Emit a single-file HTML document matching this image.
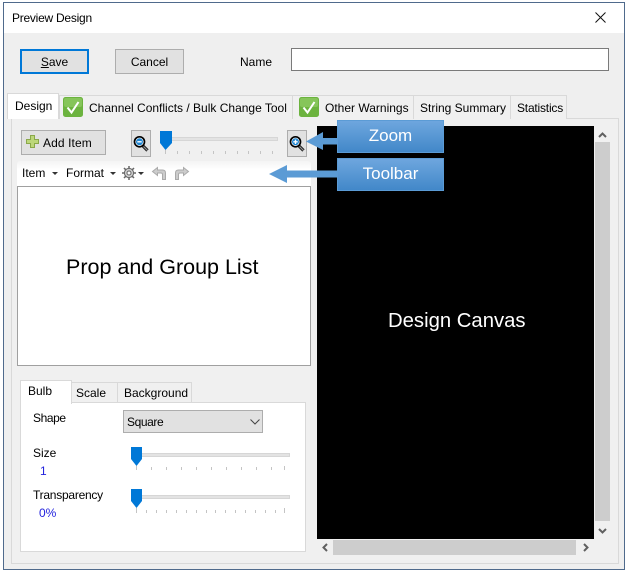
<!DOCTYPE html>
<html><head><meta charset="utf-8"><style>
html,body{margin:0;padding:0;width:626px;height:571px;overflow:hidden;background:#fff}
body{position:relative;font-family:"Liberation Sans",sans-serif;font-size:12px;color:#000}
.a{position:absolute;box-sizing:border-box}
.t{position:absolute;white-space:nowrap;line-height:16px}
.btn{position:absolute;box-sizing:border-box;background:#e1e1e1;border:1px solid #adadad}
.tab{position:absolute;box-sizing:border-box;background:#f0f0f0;border:1px solid #d9d9d9;border-bottom:none}
svg{position:absolute;overflow:visible}
.call{position:absolute;box-sizing:border-box;width:107px;height:33px;background:linear-gradient(#6ea6de,#4288c9);border:1px solid #5b9bd5;color:#fff;font-size:17px;text-align:center;line-height:30px}
</style></head><body>
<div class="a" style="left:3px;top:2px;width:622px;height:568px;background:#efefef;border:1px solid #4f6a8c"></div>
<div class="a" style="left:4px;top:3px;width:620px;height:30px;background:#fff"></div>
<div class="t" style="left:12px;top:10px;letter-spacing:-0.25px">Preview Design</div>
<svg style="left:595px;top:12px" width="11" height="11"><path d="M0.5 0.5L10.5 10.5M10.5 0.5L0.5 10.5" stroke="#111" fill="none"/></svg>

<div class="btn" style="left:20px;top:49px;width:69px;height:25px;border:2px solid #0078d7;text-align:center;line-height:23px"><u>S</u>ave</div>
<div class="btn" style="left:115px;top:49px;width:69px;height:25px;text-align:center;line-height:24px">Cancel</div>
<div class="t" style="left:240px;top:54px">Name</div>
<div class="a" style="left:291px;top:48px;width:318px;height:23px;background:#fff;border:1px solid #7a7a7a"></div>

<!-- main panel -->
<div class="a" style="left:11px;top:118px;width:608px;height:446px;background:#f0f0f0;border:1px solid #d9d9d9"></div>
<!-- tabs -->
<div class="tab" style="left:59px;top:95px;width:234px;height:24px"></div>
<div class="tab" style="left:292px;top:95px;width:122px;height:24px"></div>
<div class="tab" style="left:413px;top:95px;width:98px;height:24px"></div>
<div class="tab" style="left:510px;top:95px;width:57px;height:24px"></div>
<div class="tab" style="left:7px;top:93px;width:52px;height:26px;background:#fff;z-index:2"></div>
<div class="t" style="left:15px;top:98px;z-index:3">Design</div>
<svg style="left:63px;top:97px" width="20" height="20"><rect x="0" y="0" width="20" height="20" rx="2.5" fill="#6cb33f"/><rect x="1" y="1" width="18" height="9" rx="2" fill="#86c55a"/><path d="M4.5 10.5L8.5 15.5L15.5 5" stroke="#fff" stroke-width="2" fill="none"/></svg>
<div class="t" style="left:89px;top:100px">Channel Conflicts / Bulk Change Tool</div>
<svg style="left:299px;top:97px" width="20" height="20"><rect x="0" y="0" width="20" height="20" rx="2.5" fill="#6cb33f"/><rect x="1" y="1" width="18" height="9" rx="2" fill="#86c55a"/><path d="M4.5 10.5L8.5 15.5L15.5 5" stroke="#fff" stroke-width="2" fill="none"/></svg>
<div class="t" style="left:325px;top:100px">Other Warnings</div>
<div class="t" style="left:420px;top:100px">String Summary</div>
<div class="t" style="left:517px;top:100px;letter-spacing:-0.2px">Statistics</div>

<!-- add item -->
<div class="btn" style="left:21px;top:130px;width:85px;height:25px"></div>
<svg style="left:26px;top:135px" width="14" height="14"><path d="M4.5 0.5H8.5V4.500H12.500V8.500H8.500V12.500H4.500V8.500H0.500V4.500H4.500Z" fill="#bcd77a" stroke="#8aa84a"/></svg>
<div class="t" style="left:43px;top:135px;letter-spacing:0.1px">Add Item</div>
<!-- zoom buttons -->
<div class="btn" style="left:131px;top:130px;width:20px;height:27px"></div>
<svg style="left:134px;top:136px" width="16" height="16"><path d="M9 10L13.500 14.500" stroke="#222" stroke-width="3.200"/><path d="M9.500 10.500L13.500 14.500" stroke="#999" stroke-width="1"/><circle cx="5.500" cy="5.800" r="5" fill="#fff" stroke="#000" stroke-width="1.700"/><circle cx="5.500" cy="5.800" r="3.500" fill="#1f86d2"/><path d="M3.300 5.800H7.700" stroke="#fff" stroke-width="1.400"/></svg>
<div class="btn" style="left:287px;top:130px;width:20px;height:27px"></div>
<svg style="left:290px;top:136px" width="16" height="16"><path d="M9 10L13.500 14.500" stroke="#222" stroke-width="3.200"/><path d="M9.500 10.500L13.500 14.500" stroke="#999" stroke-width="1"/><circle cx="5.500" cy="5.800" r="5" fill="#fff" stroke="#000" stroke-width="1.700"/><circle cx="5.500" cy="5.800" r="3.500" fill="#1f86d2"/><path d="M3.300 5.800H7.700M5.500 3.600V8" stroke="#fff" stroke-width="1.400"/></svg>
<!-- zoom slider -->
<div class="a" style="left:160px;top:137px;width:118px;height:4px;background:#e3e3e3;border:1px solid #d6d6d6"></div>
<svg style="left:160px;top:131px" width="120" height="26"><path d="M0 0H12V12L5.500 19L0 12Z" fill="#0078d7"/><path d="M5.500 19V23M17.500 20V23M29.500 20V23M41.500 20V23M53.500 20V23M65.500 20V23M77.500 20V23M88.500 20V23M100.500 20V23M112.500 20V23" stroke="#c4c4c4"/></svg>

<!-- toolbar -->
<div class="a" style="left:17px;top:161px;width:294px;height:25px;background:linear-gradient(#f4f4f4,#fff 35%,#fff);border-radius:3px 3px 0 0"></div>
<div class="t" style="left:22px;top:165px">Item</div>
<svg style="left:52px;top:172px" width="6" height="4"><path d="M0 0H6L3 3Z" fill="#333"/></svg>
<div class="t" style="left:66px;top:165px">Format</div>
<svg style="left:110px;top:172px" width="6" height="4"><path d="M0 0H6L3 3Z" fill="#333"/></svg>
<svg style="left:122px;top:166px" width="14" height="14"><circle cx="7" cy="7" r="4.6" fill="#ccc" stroke="#666"/><circle cx="7" cy="7" r="2" fill="#fff" stroke="#666"/><path d="M7 0V2.5M7 11.5V14M0 7H2.5M11.5 7H14M2 2L3.8 3.8M10.2 10.2L12 12M12 2L10.2 3.8M3.8 10.2L2 12" stroke="#666" stroke-width="1.5"/></svg>
<svg style="left:138px;top:172px" width="6" height="4"><path d="M0 0H6L3 3Z" fill="#333"/></svg>
<svg style="left:152px;top:167px" width="14" height="13"><path d="M5.5 0.5L0.5 4.5L5.5 8.5V6H9C10 6 10.5 6.5 10.5 7.5V12.5H13.5V6C13.5 4 12.5 3 10.5 3H5.5Z" fill="#ccc" stroke="#aaa"/></svg>
<svg style="left:175px;top:167px" width="14" height="13"><path d="M8.5 0.5L13.5 4.5L8.5 8.5V6H5C4 6 3.5 6.5 3.5 7.5V12.5H0.5V6C0.5 4 1.500 3 3.5 3H8.5Z" fill="#ccc" stroke="#aaa"/></svg>

<!-- list -->
<div class="a" style="left:17px;top:186px;width:294px;height:180px;background:#fff;border:1px solid #a0a0a0"></div>
<div class="t" style="left:66px;top:254px;font-size:21.500px;line-height:26px">Prop and Group List</div>

<!-- canvas -->
<div class="a" style="left:317px;top:126px;width:277px;height:413px;background:#000"></div>
<div class="t" style="left:388px;top:308px;font-size:20.300px;line-height:26px;color:#fff">Design Canvas</div>
<!-- scrollbars -->
<div class="a" style="left:595px;top:142px;width:15px;height:379px;background:#cdcdcd"></div>
<div class="a" style="left:333px;top:540px;width:243px;height:15px;background:#cdcdcd"></div>
<svg style="left:598px;top:132px" width="9" height="6"><path d="M1 5L4.500 1.500L8 5" stroke="#606060" stroke-width="2" fill="none"/></svg>
<svg style="left:598px;top:528px" width="9" height="6"><path d="M1 1L4.500 4.500L8 1" stroke="#606060" stroke-width="2" fill="none"/></svg>
<svg style="left:322px;top:543px" width="6" height="9"><path d="M5 1L1.500 4.500L5 8" stroke="#606060" stroke-width="2" fill="none"/></svg>
<svg style="left:583px;top:543px" width="6" height="9"><path d="M1 1L4.500 4.500L1 8" stroke="#606060" stroke-width="2" fill="none"/></svg>

<!-- callouts -->
<div class="call" style="left:337px;top:120px">Zoom</div>
<div class="call" style="left:337px;top:158px">Toolbar</div>
<svg style="left:0;top:0" width="626" height="571"><path d="M306 141.500L323 132V138H337V144.500H323V150Z" fill="#5b9bd5"/><path d="M269 174L287 165V170.500H337V177.500H287V183Z" fill="#5b9bd5"/></svg>

<!-- bottom panel -->
<div class="tab" style="left:71px;top:382px;width:47px;height:21px"></div>
<div class="tab" style="left:117px;top:382px;width:75px;height:21px"></div>
<div class="a" style="left:20px;top:402px;width:286px;height:150px;background:#fff;border:1px solid #d9d9d9"></div>
<div class="tab" style="left:20px;top:380px;width:52px;height:24px;background:#fff"></div>
<div class="t" style="left:28px;top:383px">Bulb</div>
<div class="t" style="left:76px;top:385px">Scale</div>
<div class="t" style="left:124px;top:385px">Background</div>
<div class="t" style="left:33px;top:410px;letter-spacing:-0.4px">Shape</div>
<div class="btn" style="left:123px;top:410px;width:140px;height:23px"></div>
<div class="t" style="left:127px;top:414px;letter-spacing:-0.4px">Square</div>
<svg style="left:250px;top:419px" width="10" height="6"><path d="M0.500 0.500L5 5L9.500 0.500" stroke="#444" fill="none"/></svg>
<div class="t" style="left:33px;top:445px">Size</div>
<div class="t" style="left:40px;top:463px;color:#2222dd">1</div>
<div class="a" style="left:131px;top:453px;width:159px;height:4px;background:#e3e3e3;border:1px solid #d6d6d6"></div>
<svg style="left:131px;top:447px" width="160" height="25"><path d="M0 0H11V12L5.500 19L0 12Z" fill="#0078d7"/><path d="M5.500 19V23M20.500 20V23M35.500 20V23M50.500 20V23M65.500 20V23M80.500 20V23M95.500 20V23M110.500 20V23M125.500 20V23M140.500 20V23M153.500 19V23" stroke="#c4c4c4"/></svg>
<div class="t" style="left:33px;top:487px;letter-spacing:-0.25px">Transparency</div>
<div class="t" style="left:39px;top:505px;color:#2222dd">0%</div>
<div class="a" style="left:131px;top:495px;width:159px;height:4px;background:#e3e3e3;border:1px solid #d6d6d6"></div>
<svg style="left:131px;top:489px" width="160" height="25"><path d="M0 0H11V12L5.500 19L0 12Z" fill="#0078d7"/><path d="M5.500 19V24M15.500 21V24M25.500 21V24M35.500 21V24M45.500 21V24M55.500 21V24M65.500 21V24M75.500 21V24M84.500 21V24M94.500 21V24M104.500 21V24M114.500 21V24M124.500 21V24M134.500 21V24M144.500 21V24M153.500 19V24" stroke="#c4c4c4"/></svg>
</body></html>
